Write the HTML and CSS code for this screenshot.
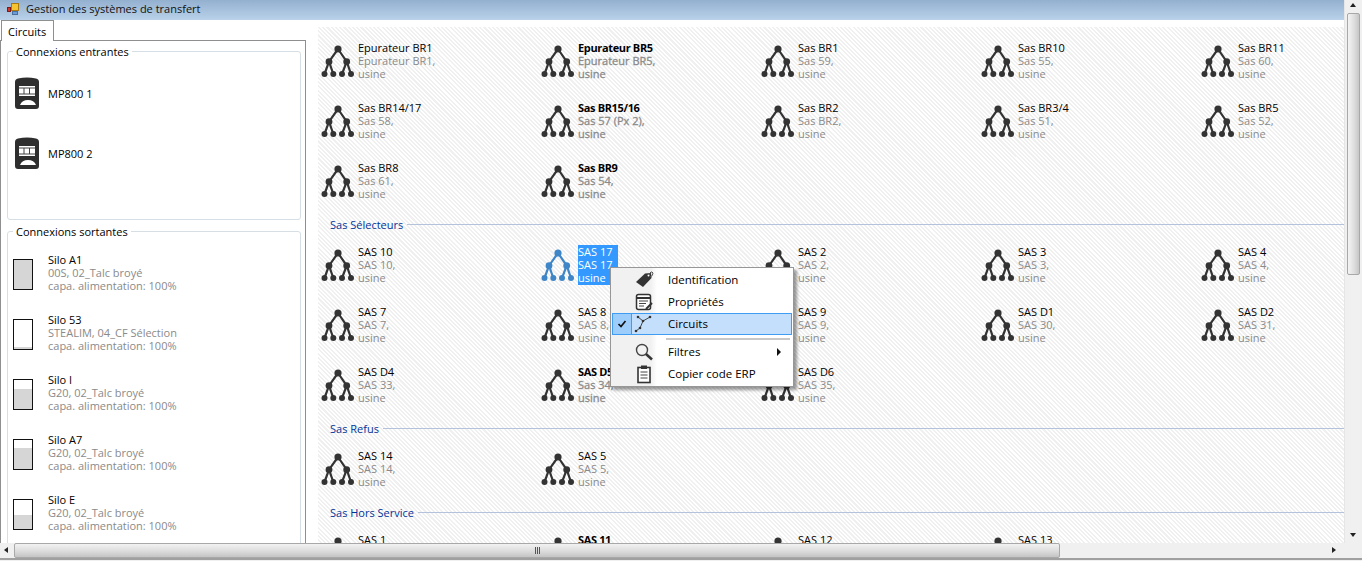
FILE: index.html
```html
<!DOCTYPE html>
<html lang="fr">
<head>
    <meta charset="UTF-8">
    <title>Gestion des systèmes de transfert</title>
    <link rel="stylesheet" href="styles.css">
</head>
<body>
    <svg class="defs" width="0" height="0">
        <symbol id="tree" viewBox="0 0 36 36">
            <path d="M18 6L9 18.700L4.500 31M9 18.700L13.300 31M18 6L26.700 18.700L22 31M26.700 18.700L31 31" fill="none" stroke="currentColor" stroke-width="2.200"/>
            <circle cx="18" cy="6" r="3.600"/><circle cx="9" cy="18.700" r="3.400"/><circle cx="26.700" cy="18.700" r="3.400"/>
            <circle cx="4.500" cy="31" r="3"/><circle cx="13.300" cy="31" r="3"/><circle cx="22" cy="31" r="3"/><circle cx="31" cy="31" r="3"/>
        </symbol>
        <symbol id="mp" viewBox="0 0 24 32">
            <path d="M0 5Q0 2 3 1.500Q12 -.5 21 1.500Q24 2 24 5V29Q24 32 21 32H3Q0 32 0 29Z" fill="#2e2e2e"/>
            <path d="M4 9H20V19H4Z" fill="#fff"/>
            <path d="M4 10.500H20V11.500H4ZM4 16.500H20V17.500H4ZM8.500 11H9.500V17H8.500ZM14 11H15V17H14Z" fill="#444"/>
            <path d="M5 28Q7 23 13 23Q19 23 21 28Z" fill="#fff"/>
        </symbol>
    </svg>

    <div class="upper">
        <div class="main">
            <header class="titlebar">
                <svg class="app-icon" width="16" height="16" viewBox="0 0 16 16">
                    <rect x="8.500" y="2.500" width="7" height="7" fill="#f6c431" stroke="#a87a10"/>
                    <rect x="4.500" y="6.500" width="3" height="4" fill="#d9342b" stroke="#7d1a14"/>
                    <rect x="9.500" y="10.500" width="5" height="3" fill="#6f9bd8" stroke="#48709f"/>
                </svg>
                <span>Gestion des systèmes de transfert</span>
            </header>

            <div class="content">
                <div class="left">
                    <div class="tab">Circuits</div>
                    <div class="tab-panel">
                        <fieldset class="group group-in">
                            <legend>Connexions entrantes</legend>
                            <div class="conn"><svg class="mp-icon"><use href="#mp"/></svg><span>MP800 1</span></div>
                            <div class="conn"><svg class="mp-icon"><use href="#mp"/></svg><span>MP800 2</span></div>
                        </fieldset>
                        <fieldset class="group group-out">
                            <legend>Connexions sortantes</legend>
                            <div class="silo"><div class="gauge"><div class="level" style="height: 100%"></div></div><div class="lines"><b>Silo A1</b><span>00S, 02_Talc broyé</span><span>capa. alimentation: 100%</span></div></div>
                            <div class="silo"><div class="gauge"><div class="level" style="height: 7%"></div></div><div class="lines"><b>Silo 53</b><span>STEALIM, 04_CF Sélection</span><span>capa. alimentation: 100%</span></div></div>
                            <div class="silo"><div class="gauge"><div class="level" style="height: 70%"></div></div><div class="lines"><b>Silo I</b><span>G20, 02_Talc broyé</span><span>capa. alimentation: 100%</span></div></div>
                            <div class="silo"><div class="gauge"><div class="level" style="height: 72%"></div></div><div class="lines"><b>Silo A7</b><span>G20, 02_Talc broyé</span><span>capa. alimentation: 100%</span></div></div>
                            <div class="silo"><div class="gauge"><div class="level" style="height: 50%"></div></div><div class="lines"><b>Silo E</b><span>G20, 02_Talc broyé</span><span>capa. alimentation: 100%</span></div></div>
                        </fieldset>
                    </div>
                </div>

                <main class="board">
                    <div class="grid" id="g0"></div>
                    <h2 class="section">Sas Sélecteurs</h2>
                    <div class="grid" id="g1"></div>
                    <h2 class="section">Sas Refus</h2>
                    <div class="grid" id="g2"></div>
                    <h2 class="section">Sas Hors Service</h2>
                    <div class="grid" id="g3"></div>
                </main>
            </div>
        </div>

        <div class="vscroll">
            <div class="arrow up"></div>
            <div class="vthumb"></div>
            <div class="vtrack"></div>
            <div class="arrow down"></div>
        </div>
    </div>

    <div class="hscroll">
        <div class="harrow left-arrow"></div>
        <div class="hthumb"><i></i><i></i><i></i></div>
        <div class="htrack"></div>
        <div class="harrow right-arrow"></div>
        <div class="corner"></div>
    </div>

    <div class="menu">
        <div class="menu-item">
            <span class="check"></span>
            <svg class="menu-icon" viewBox="0 0 20 20"><path d="M2 12L11 3.500L17 3L17.500 8L9 17Z" fill="#333"/><circle cx="14.500" cy="5.500" r="1" fill="#fff"/><path d="M15 5Q17 0 19 3Q19 6 16 7" fill="none" stroke="#555"/></svg>
            <span class="label">Identification</span>
        </div>
        <div class="menu-item">
            <span class="check"></span>
            <svg class="menu-icon" viewBox="0 0 20 20"><rect x="2.500" y="2.500" width="14" height="15" rx="2" fill="#fff" stroke="#333" stroke-width="1.500"/><path d="M2 6H17" stroke="#333" stroke-width="2"/><path d="M5 9H14M5 11.500H12M5 14H10" stroke="#444"/><path d="M12 17L18 11" stroke="#333" stroke-width="2"/></svg>
            <span class="label">Propriétés</span>
        </div>
        <div class="menu-item active">
            <span class="check">
                <svg width="10" height="10" viewBox="0 0 10 10"><path d="M1.500 5L4 7.500L8.500 2" fill="none" stroke="#111" stroke-width="1.700"/></svg>
            </span>
            <svg class="menu-icon" viewBox="0 0 20 20"><path d="M4 3L9 7L6 14L2 17M9 7L16 3" fill="none" stroke="#444"/><circle cx="4" cy="3" r="1.300" fill="#333"/><circle cx="9" cy="7" r="1.300" fill="#333"/><circle cx="6" cy="14" r="1.300" fill="#333"/><circle cx="2" cy="17" r="1.300" fill="#333"/><circle cx="16" cy="3" r="1.300" fill="#333"/></svg>
            <span class="label">Circuits</span>
        </div>
        <div class="menu-sep"></div>
        <div class="menu-item">
            <span class="check"></span>
            <svg class="menu-icon" viewBox="0 0 20 20"><circle cx="8" cy="8" r="5.500" fill="#f2f2f2" stroke="#444" stroke-width="1.400"/><path d="M12 12L18 17.500" stroke="#333" stroke-width="2.500"/></svg>
            <span class="label">Filtres</span>
            <span class="submenu"></span>
        </div>
        <div class="menu-item">
            <span class="check"></span>
            <svg class="menu-icon" viewBox="0 0 20 20"><rect x="4" y="3.500" width="12" height="15" fill="#fff" stroke="#333" stroke-width="1.600"/><rect x="7" y="1.500" width="6" height="3.500" fill="#333"/><path d="M6.500 8H13.500M6.500 11H13.500M6.500 14H13.500" stroke="#444"/></svg>
            <span class="label">Copier code ERP</span>
        </div>
    </div>

    <script>
        // name, line 2, state (1 = bold, 2 = selected)
        var groups = [
            [["Epurateur BR1", "Epurateur BR1,"], ["Epurateur BR5", "Epurateur BR5,", 1], ["Sas BR1", "Sas 59,"], ["Sas BR10", "Sas 55,"], ["Sas BR11", "Sas 60,"],
             ["Sas BR14/17", "Sas 58,"], ["Sas BR15/16", "Sas 57 (Px 2),", 1], ["Sas BR2", "Sas BR2,"], ["Sas BR3/4", "Sas 51,"], ["Sas BR5", "Sas 52,"],
             ["Sas BR8", "Sas 61,"], ["Sas BR9", "Sas 54,", 1]],
            [["SAS 10", "SAS 10,"], ["SAS 17", "SAS 17", 2], ["SAS 2", "SAS 2,"], ["SAS 3", "SAS 3,"], ["SAS 4", "SAS 4,"],
             ["SAS 7", "SAS 7,"], ["SAS 8", "SAS 8,"], ["SAS 9", "SAS 9,"], ["SAS D1", "SAS 30,"], ["SAS D2", "SAS 31,"],
             ["SAS D4", "SAS 33,"], ["SAS D5", "Sas 34,", 1], ["SAS D6", "SAS 35,"]],
            [["SAS 14", "SAS 14,"], ["SAS 5", "SAS 5,"]],
            [["SAS 1", "SAS 1,"], ["SAS 11", "SAS 11,", 1], ["SAS 12", "SAS 12,"], ["SAS 13", "SAS 13,"]]
        ];

        groups.forEach(function (items, i) {
            var grid = document.getElementById('g' + i);
            items.forEach(function (it) {
                var el = document.createElement('div');
                el.className = 'item' + (it[2] === 1 ? ' on' : '') + (it[2] === 2 ? ' selected' : '');
                el.innerHTML = '<svg class="tree"><use href="#tree"/></svg>' +
                    '<div class="lines"><b>' + it[0] + '</b><span>' + it[1] + '</span><span>usine</span></div>';
                grid.appendChild(el);
            });
        });
    </script>
</body>
</html>
```
FILE: styles.css
```css
* {
    box-sizing: border-box;
}
html, body {
    height: 100%;
}
body {
    margin: 0;
    overflow: hidden;
    background: #f0f0f0;
    font-family: "Open Sans", "Noto Sans", sans-serif;
    font-size: 11px;
    color: #000;
    display: flex;
    flex-direction: column;
}
.defs {
    position: absolute;
}
.upper {
    height: 543px;
    flex: none;
    display: flex;
}
.main {
    flex: 1;
    min-width: 0;
    display: flex;
    flex-direction: column;
}
.titlebar {
    height: 20px;
    flex: none;
    display: flex;
    align-items: center;
    gap: 7px;
    padding: 0 0 3px 3px;
    background: linear-gradient(#93b0cf, #bad2ea);
    color: #111;
}
.content {
    flex: 1;
    min-height: 0;
    display: flex;
    background: #fff;
}

/* left column */
.left {
    width: 318px;
    flex: none;
    overflow: hidden;
}
.tab {
    width: 53px;
    height: 21px;
    margin-left: 1px;
    padding: 3px 0 0 6px;
    background: #fff;
    border: 1px solid #8f8f8f;
    border-bottom: 0;
    position: relative;
    z-index: 1;
}
.tab-panel {
    width: 306px;
    height: 600px;
    margin-top: -1px;
    padding: 3px 4px 0 6px;
    border: 1px solid #8f8f8f;
}
.group {
    margin: 0 0 4px;
    padding: 0;
    border: 1px solid #d5dfe5;
    border-radius: 3px;
}
.group legend {
    margin-left: 5px;
    padding: 0 3px;
    line-height: 15px;
}
.group-in {
    height: 176px;
    padding-top: 4px;
}
.conn {
    height: 60px;
    display: flex;
    align-items: center;
    padding-left: 7px;
    gap: 9px;
}
.mp-icon {
    width: 24px;
    height: 32px;
}
.silo {
    height: 60px;
    display: flex;
    align-items: flex-start;
    padding: 2px 0 0 5px;
    gap: 15px;
}
.gauge {
    width: 20px;
    height: 31px;
    margin-top: 6px;
    flex: none;
    display: flex;
    align-items: flex-end;
    border: 1px solid #111;
    background: #fff;
}
.level {
    width: 100%;
    background: #d6d6d6;
}
.group-out {
    padding-top: 12px;
    height: 400px;
}
.lines {
    display: flex;
    flex-direction: column;
    line-height: 13px;
    color: #8a8a8a;
    white-space: nowrap;
}
.lines b {
    font-weight: 400;
    color: #000;
}

/* right board */
.board {
    flex: 1;
    min-width: 0;
    overflow: hidden;
    margin-top: 7px;
    background: repeating-linear-gradient(45deg, #fff 0, #fff 1.500px, #f0f0f0 1.500px, #f0f0f0 3px);
}
.grid {
    display: grid;
    grid-template-columns: repeat(5, 220px);
    grid-auto-rows: 60px;
    padding-left: 2px;
}
.item {
    display: flex;
    gap: 2px;
    color: #333;
    padding-top: 14px;
    height: 60px;
}
.tree {
    width: 36px;
    height: 36px;
    margin-top: 2px;
    flex: none;
    fill: currentColor;
}
.item .lines {
    height: 40px;
}
.item.on b {
    font-weight: 700;
    letter-spacing: -.35px;
}
.item.on span {
    -webkit-text-stroke: .3px currentColor;
}
.item.selected {
    color: #3f86c8;
}
.item.selected .lines {
    background: #3399ff;
    padding-right: 6px;
    color: #fff;
}
.item.selected .lines b {
    color: #fff;
}
.section {
    margin: 10px 0 0;
    height: 14px;
    padding-left: 12px;
    display: flex;
    align-items: center;
    gap: 4px;
    font-size: 11px;
    font-weight: 400;
    color: #003399;
}
.section::after {
    content: "";
    flex: 1;
    height: 1px;
    background: #b4c2dc;
}

/* scrollbars */
.vscroll {
    width: 18px;
    flex: none;
    display: flex;
    flex-direction: column;
    padding: 0 2px 0 2px;
    background: #f0f0f0;
    border-left: 1px solid #e6e6e6;
}
.arrow {
    height: 13px;
    flex: none;
    position: relative;
}
.arrow::after {
    content: "";
    position: absolute;
    left: 3px;
    top: 3px;
    border: 3.500px solid transparent;
}
.arrow.up::after {
    border-bottom: 4px solid #222;
    border-top: 0;
}
.arrow.down::after {
    border-top: 4px solid #222;
    border-bottom: 0;
}
.vthumb {
    height: 262px;
    flex: none;
    border: 1px solid #a8a8a8;
    border-radius: 2px;
    background: linear-gradient(90deg, #f4f4f4, #dcdcdc 60%, #c6c6c6);
}
.vtrack {
    flex: 1;
}
.hscroll {
    height: 17px;
    flex: none;
    display: flex;
    background: #f0f0f0;
    border-bottom: 2px solid #a0a0a0;
}
.harrow {
    width: 14px;
    flex: none;
    position: relative;
}
.harrow::after {
    content: "";
    position: absolute;
    top: 4px;
    left: 4px;
    border: 3.500px solid transparent;
}
.left-arrow::after {
    border-right: 4px solid #222;
    border-left: 0;
}
.right-arrow::after {
    border-left: 4px solid #222;
    border-right: 0;
}
.hthumb {
    width: 1046px;
    flex: none;
    display: flex;
    justify-content: center;
    align-items: center;
    gap: 1px;
    border: 1px solid #a8a8a8;
    border-radius: 2px;
    background: linear-gradient(#f2f2f2, #dcdcdc 55%, #c4c4c4);
}
.hthumb i {
    width: 1px;
    height: 7px;
    background: #555;
}
.htrack {
    flex: 1;
}
.corner {
    width: 20px;
    flex: none;
}

/* context menu */
.menu {
    position: absolute;
    left: 610px;
    top: 267px;
    width: 184px;
    height: 120px;
    padding: 1px;
    background: linear-gradient(90deg, #f1f1f1, #f1f1f1 40px, #fff 46px);
    border: 1px solid #979797;
    box-shadow: 3px 3px 3px rgba(0, 0, 0, .4);
    font-size: 11.500px;
}
.menu-item {
    height: 22px;
    display: flex;
    align-items: center;
    position: relative;
}
.label {
    padding-bottom: 2px;
}
.check {
    width: 20px;
    height: 22px;
    flex: none;
    display: flex;
    align-items: center;
    justify-content: center;
}
.menu-icon {
    width: 20px;
    height: 20px;
    margin: 0 14px 0 2px;
    flex: none;
}
.menu-item.active {
    background: #c4dffc;
    outline: 1px solid #3f9cf3;
    outline-offset: -1px;
}
.active .check {
    background: #9dcdfa;
    border: 1px solid #3f9cf3;
}
.menu-sep {
    height: 2px;
    margin: 3px 2px 1px 54px;
    background: #c8c8c8;
}
.submenu {
    position: absolute;
    right: 11px;
    top: 7px;
    border-left: 4px solid #111;
    border-top: 4px solid transparent;
    border-bottom: 4px solid transparent;
}
```
